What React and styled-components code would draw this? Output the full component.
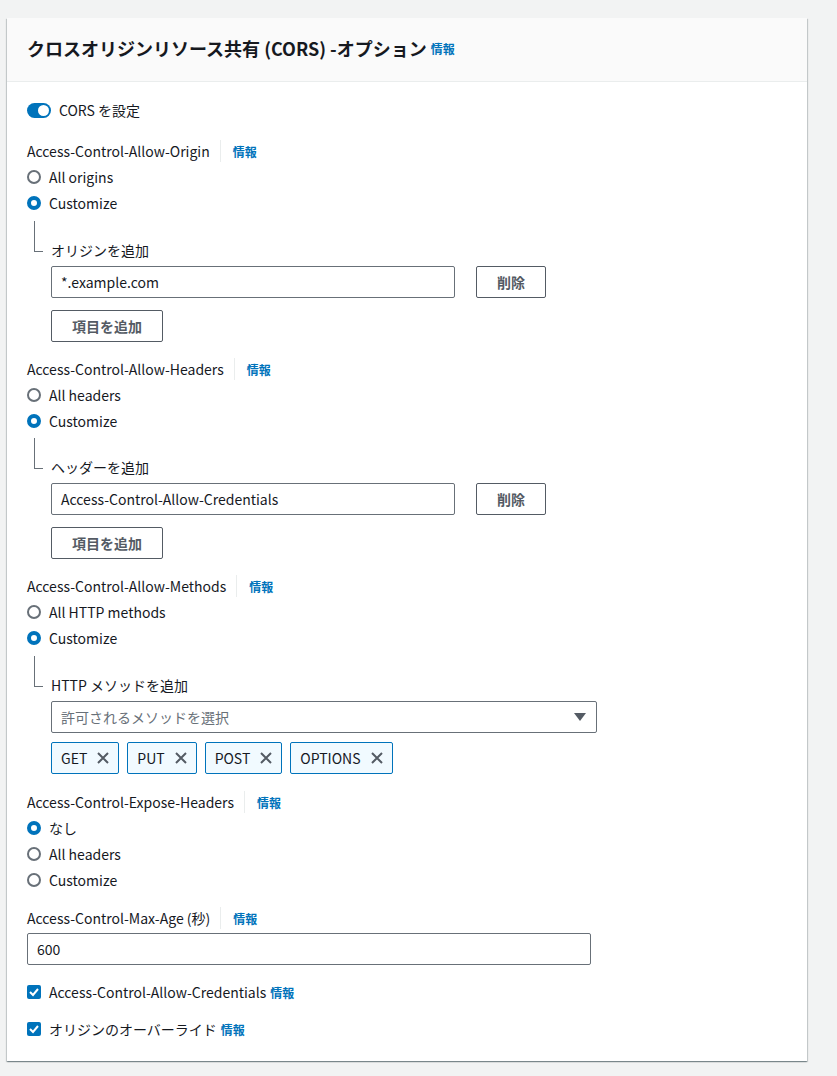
import React from 'react';
import styled, { createGlobalStyle } from 'styled-components';

const GlobalStyle = createGlobalStyle`
  body {
    margin: 0;
    background: #f2f3f3;
    font-family: "Noto Sans CJK JP", "Noto Sans", sans-serif;
    font-size: 14px;
    color: #16191f;
  }
`

const Page = styled.div`
  padding: 18px 0 14px 7px;
`

const Card = styled.div`
  width: 800px;
  background: #fff;
  box-shadow: 0 1px 1px 0 rgba(0, 28, 36, 0.3), 1px 1px 1px 0 rgba(0, 28, 36, 0.15), -1px 1px 1px 0 rgba(0, 28, 36, 0.15);
`

const Header = styled.div`
  height: 64px;
  box-sizing: border-box;
  background: #fafafa;
  border-bottom: 1px solid #eaeded;
  display: flex;
  align-items: center;
  padding: 0 20px 3px;
`

const Title = styled.h2`
  margin: 0;
  font-size: 18px;
  font-weight: 700;
  line-height: 22px;
`

const Info = styled.span`
  color: #0073bb;
  font-size: 12px;
  font-weight: 700;
  margin-left: ${({ $gap }) => $gap || 4}px;
`

const Body = styled.div`
  padding: 18px 20px 22px;
  display: flex;
  flex-direction: column;
`

const ToggleRow = styled.label`
  display: flex;
  align-items: center;
  gap: 8px;
  height: 20px;
`

const Toggle = styled.span`
  width: 24px;
  height: 15px;
  border-radius: 8px;
  background: #0073bb;
  display: flex;
  align-items: center;
  justify-content: flex-end;
  padding: 0 2px;
  box-sizing: border-box;
  &::after {
    content: "";
    width: 11px;
    height: 11px;
    border-radius: 50%;
    background: #fff;
  }
`

const FieldLabel = styled.div`
  display: flex;
  align-items: center;
  height: 20px;
  margin-top: ${({ $top }) => $top}px;
  margin-bottom: ${({ $bottom }) => ($bottom === undefined ? 3 : $bottom)}px;
`

const Divider = styled.span`
  width: 1px;
  height: 22px;
  background: #eaeded;
  margin: 0 8px 0 10px;
`

const RadioRow = styled.label`
  display: flex;
  align-items: center;
  gap: 8px;
  height: 26px;
`

const Radio = styled.span`
  width: 14px;
  height: 14px;
  box-sizing: border-box;
  border-radius: 50%;
  border: ${({ $checked }) => ($checked ? '4px solid #0073bb' : '2px solid #687078')};
  background: #fff;
`

const Tree = styled.div`
  padding: ${({ $top }) => $top}px 0 0 24px;
`

const TreeLabel = styled.div`
  position: relative;
  height: 20px;
  line-height: 18px;
  &::before {
    content: "";
    position: absolute;
    left: -17px;
    bottom: 9px;
    width: 8px;
    height: 30px;
    border-left: 1px solid #687078;
    border-bottom: 1px solid #687078;
  }
`

const InputRow = styled.div`
  display: flex;
  gap: 21px;
  margin-top: 5px;
`

const TextInput = styled.div`
  width: ${({ $width }) => $width}px;
  height: 32px;
  box-sizing: border-box;
  border: 1px solid #687078;
  border-radius: 2px;
  display: flex;
  align-items: center;
  padding: 0 9px;
  color: ${({ $placeholder }) => ($placeholder ? '#687078' : '#16191f')};
`

const Select = styled(TextInput)`
  justify-content: space-between;
  margin-top: 5px;
  padding-right: 10px;
`

const Button = styled.button`
  width: ${({ $width }) => $width}px;
  height: 32px;
  background: #fff;
  border: 1px solid #545b64;
  border-radius: 2px;
  font-family: inherit;
  font-size: 14px;
  font-weight: 700;
  color: #545b64;
  padding: 0;
`

const AddButton = styled(Button)`
  margin-top: 12px;
`

const Tokens = styled.div`
  display: flex;
  gap: 8px;
  margin-top: 9px;
`

const Token = styled.div`
  height: 32px;
  box-sizing: border-box;
  display: flex;
  align-items: center;
  gap: 10px;
  padding: 0 9px 0 9px;
  background: #f1faff;
  border: 1px solid #0073bb;
  border-radius: 2px;
`

const CheckRow = styled.label`
  display: flex;
  align-items: center;
  gap: 8px;
  height: 20px;
  margin-top: 17px;
`

const Check = styled.span`
  width: 14px;
  height: 14px;
  border-radius: 2px;
  background: #0073bb;
  display: flex;
  align-items: center;
  justify-content: center;
`

const Close = () => (
  <svg width="12" height="12" viewBox="0 0 12 12">
    <path d="M1 1 L11 11 M11 1 L1 11" stroke="#545b64" strokeWidth="2" fill="none" />
  </svg>
)

const Caret = () => (
  <svg width="12" height="10" viewBox="0 0 12 10">
    <path d="M0 1 H12 L6 9 Z" fill="#545b64" />
  </svg>
)

const Tick = () => (
  <svg width="12" height="12" viewBox="0 0 12 12">
    <path d="M2 6 L5 9 L10 3" stroke="#fff" strokeWidth="2" fill="none" />
  </svg>
)

const Label = ({ text, top, bottom }) => (
  <FieldLabel $top={top} $bottom={bottom}>
    {text}
    <Divider />
    <Info $gap={0}>情報</Info>
  </FieldLabel>
)

const Radios = ({ options, checked }) => (
  <div>
    {options.map((o, i) => (
      <RadioRow key={o}>
        <Radio $checked={i === checked} />
        {o}
      </RadioRow>
    ))}
  </div>
)

const methods = ['GET', 'PUT', 'POST', 'OPTIONS']

export default function App() {
  return (
    <Page>
      <GlobalStyle />
      <Card>
        <Header>
          <Title>クロスオリジンリソース共有 (CORS) -オプション</Title>
          <Info>情報</Info>
        </Header>
        <Body>
          <ToggleRow>
            <Toggle />
            CORS を設定
          </ToggleRow>

          <Label text="Access-Control-Allow-Origin" top={21} />
          <Radios options={['All origins', 'Customize']} checked={1} />
          <Tree $top={25}>
            <TreeLabel>オリジンを追加</TreeLabel>
            <InputRow>
              <TextInput $width={404}>*.example.com</TextInput>
              <Button $width={70}>削除</Button>
            </InputRow>
            <AddButton $width={112}>項目を追加</AddButton>
          </Tree>

          <Label text="Access-Control-Allow-Headers" top={17} />
          <Radios options={['All headers', 'Customize']} checked={1} />
          <Tree $top={24}>
            <TreeLabel>ヘッダーを追加</TreeLabel>
            <InputRow>
              <TextInput $width={404}>Access-Control-Allow-Credentials</TextInput>
              <Button $width={70}>削除</Button>
            </InputRow>
            <AddButton $width={112}>項目を追加</AddButton>
          </Tree>

          <Label text="Access-Control-Allow-Methods" top={17} />
          <Radios options={['All HTTP methods', 'Customize']} checked={1} />
          <Tree $top={25}>
            <TreeLabel>HTTP メソッドを追加</TreeLabel>
            <Select $width={546} $placeholder>
              許可されるメソッドを選択
              <Caret />
            </Select>
            <Tokens>
              {methods.map(m => (
                <Token key={m}>
                  {m}
                  <Close />
                </Token>
              ))}
            </Tokens>
          </Tree>

          <Label text="Access-Control-Expose-Headers" top={18} />
          <Radios options={['なし', 'All headers', 'Customize']} checked={0} />

          <Label text="Access-Control-Max-Age (秒)" top={15} bottom={5} />
          <TextInput $width={564}>600</TextInput>

          <CheckRow>
            <Check><Tick /></Check>
            <span>Access-Control-Allow-Credentials<Info>情報</Info></span>
          </CheckRow>
          <CheckRow>
            <Check><Tick /></Check>
            <span>オリジンのオーバーライド<Info>情報</Info></span>
          </CheckRow>
        </Body>
      </Card>
    </Page>
  )
}
